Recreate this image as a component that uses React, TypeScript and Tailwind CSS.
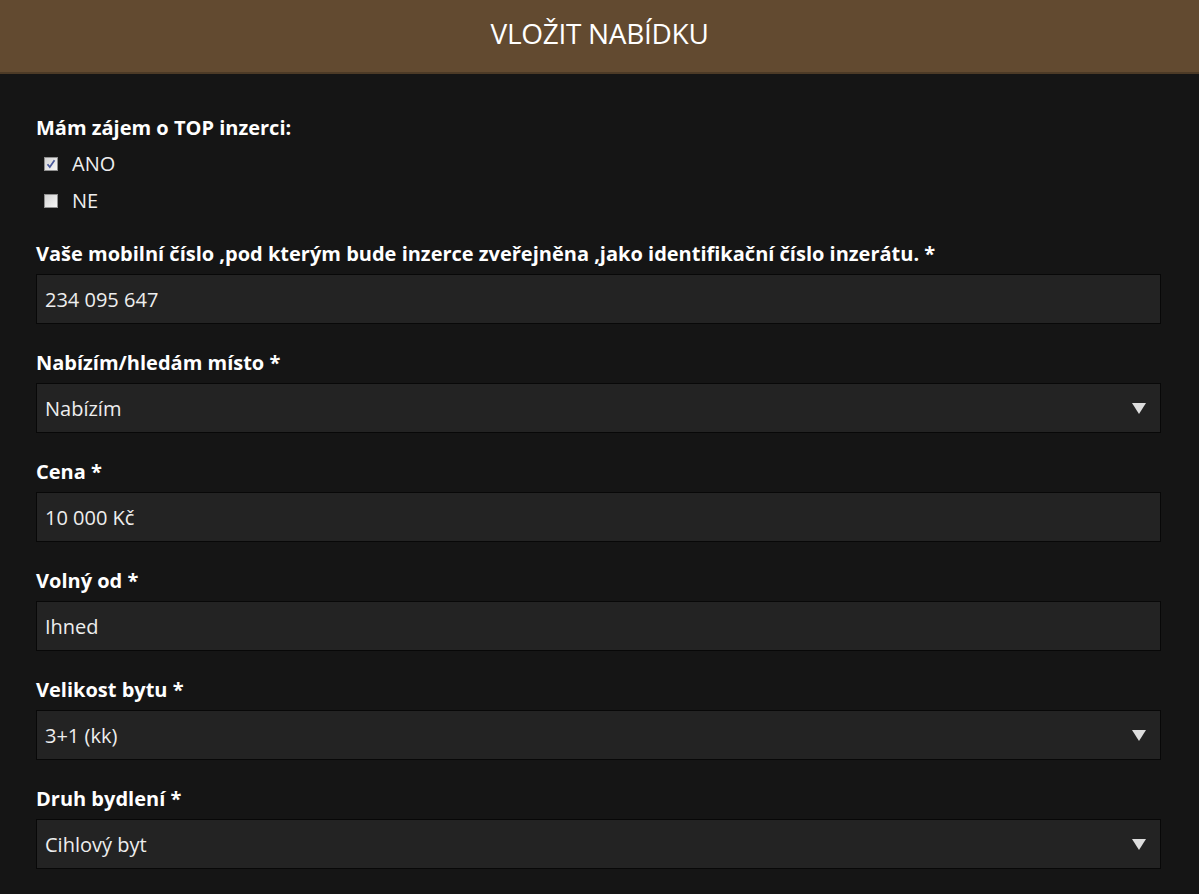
import React from "react";

const fields: { label: string; value: string; select?: boolean }[] = [
  { label: "Vaše mobilní číslo ,pod kterým bude inzerce zveřejněna ,jako identifikační číslo inzerátu. *", value: "234 095 647" },
  { label: "Nabízím/hledám místo *", value: "Nabízím", select: true },
  { label: "Cena *", value: "10 000 Kč" },
  { label: "Volný od *", value: "Ihned" },
  { label: "Velikost bytu *", value: "3+1 (kk)", select: true },
  { label: "Druh bydlení *", value: "Cihlový byt", select: true },
];

function Checkbox({ checked }: { checked?: boolean }) {
  return (
    <span className="w-[14px] h-[14px] border border-[#8f8f8f] bg-gradient-to-br from-[#d4d4d4] to-[#f7f7f7] flex items-center justify-center shrink-0">
      {checked && (
        <svg viewBox="0 0 10 10" className="w-[10px] h-[10px]">
          <path d="M1.5 5.2 L3.8 8 L8.5 1.2" fill="none" stroke="#4a5a9c" strokeWidth="1.7" />
        </svg>
      )}
    </span>
  );
}

export default function App() {
  return (
    <div className="min-h-[894px] bg-[#151515] text-white" style={{ fontFamily: '"Open Sans", sans-serif' }}>
      <div className="h-[74px] bg-[#624a30] border-b-2 border-[#4c3a26] flex items-center justify-center pb-[6px]">
        <h1 className="text-[28px] font-normal leading-[36px] tracking-[-0.3px]">VLOŽIT NABÍDKU</h1>
      </div>

      <div className="pl-[36px] pr-[38px] pt-[42px]">
        <div className="text-[20px] font-bold leading-[24px]">Mám zájem o TOP inzerci:</div>
        <div className="mt-[5px]">
          <div className="h-[37px] flex items-center gap-[14px] pl-[8px]">
            <Checkbox checked />
            <span className="text-[20px] text-[#eeeeee]">ANO</span>
          </div>
          <div className="h-[37px] flex items-center gap-[14px] pl-[8px]">
            <Checkbox />
            <span className="text-[20px] text-[#eeeeee]">NE</span>
          </div>
        </div>

        <div className="mt-[23px] flex flex-col gap-[27px]">
          {fields.map((f) => (
            <div key={f.label}>
              <div className="text-[20px] font-bold leading-[24px] mb-[8px]">{f.label}</div>
              <div className="h-[50px] bg-[#232323] border border-[#080808] flex items-center pl-[8px] pr-[14px] pt-[2px]">
                <span className="text-[20px] text-[#eeeeee] flex-1">{f.value}</span>
                {f.select && (
                  <svg viewBox="0 0 14 11" className="w-[14px] h-[11px] -mt-[2px]">
                    <path d="M0 0 H14 L7 11 Z" fill="#dddddd" />
                  </svg>
                )}
              </div>
            </div>
          ))}
        </div>
      </div>
    </div>
  );
}
